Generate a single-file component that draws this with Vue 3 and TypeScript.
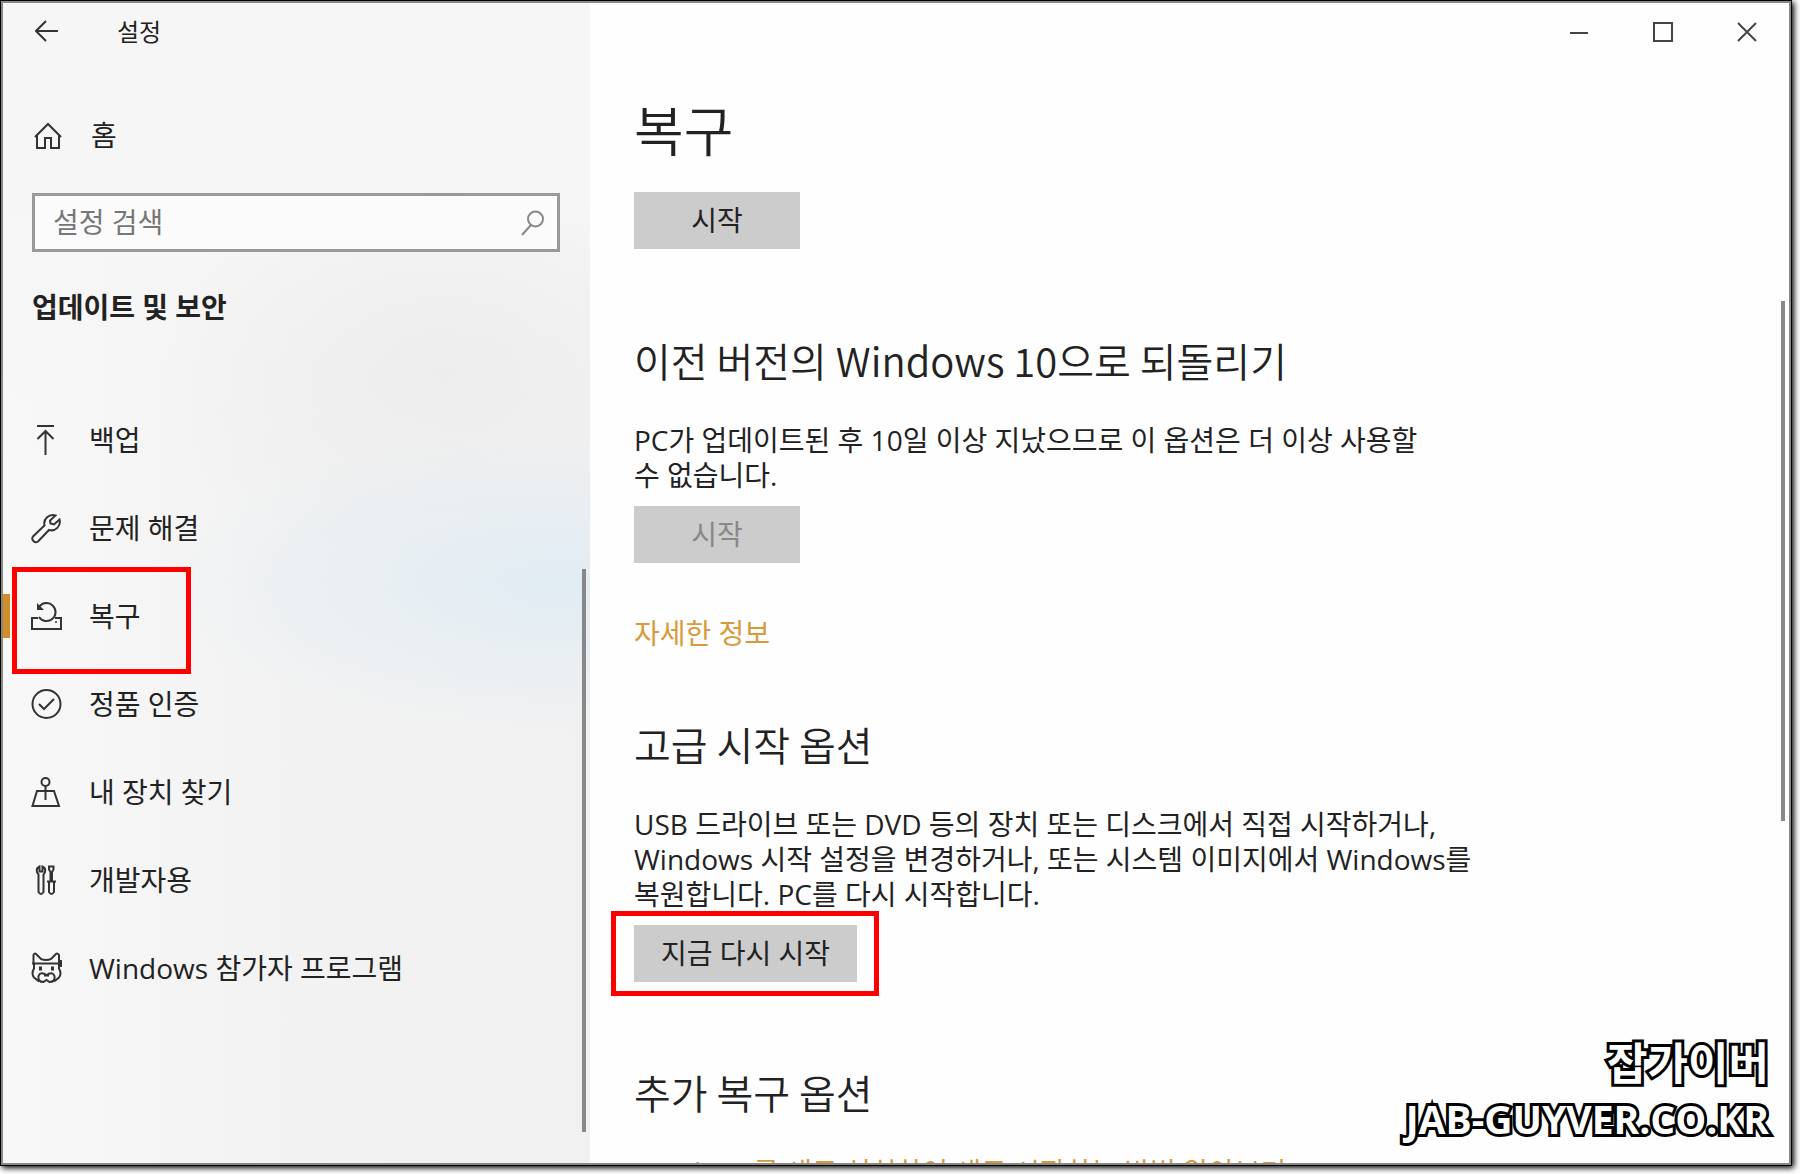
<script setup lang="ts">
interface NavItem { id: string; label: string }

const navItems: NavItem[] = [
  { id: 'backup', label: '백업' },
  { id: 'troubleshoot', label: '문제 해결' },
  { id: 'recovery', label: '복구' },
  { id: 'activation', label: '정품 인증' },
  { id: 'find', label: '내 장치 찾기' },
  { id: 'developer', label: '개발자용' },
  { id: 'insider', label: 'Windows 참가자 프로그램' },
]
const current = 'recovery'
</script>

<template>
  <div class="desktop">
    <div class="window">
      <aside class="sidebar">
        <header class="side-title">
          <button class="icon-button" type="button" aria-label="뒤로">
            <svg width="24" height="22" viewBox="0 0 24 22"><path d="M11 1 1 11l10 10M1 11h22" /></svg>
          </button>
          <span>설정</span>
        </header>
        <a class="home" href="#home">
          <svg width="28" height="28" viewBox="0 0 28 28"><path d="M1 15 14 2l13 13M3 13.500V26h8V16h6v10h8V13.500" /></svg>
          <span>홈</span>
        </a>
        <label class="search">
          <input type="text" placeholder="설정 검색" aria-label="설정 검색" />
          <svg width="24" height="28" viewBox="0 0 24 28"><circle cx="15.500" cy="10" r="7.500" /><path d="M11 16 2 26" /></svg>
        </label>
        <h2 class="category">업데이트 및 보안</h2>
        <nav class="nav">
          <a v-for="item in navItems" :key="item.id" :href="'#' + item.id" class="nav-item" :class="{ current: item.id === current }">
            <svg width="32" height="32" viewBox="0 0 32 32">
              <path v-if="item.id === 'backup'" d="M7 2h17M15.500 31V7M7.500 15l8-8 8 8" />
              <path v-else-if="item.id === 'troubleshoot'" d="M25.500 3.500A8.500 8.500 0 0 0 14.500 13.500L3 24.500A3.600 3.600 0 0 0 8 29.500L19 18A8.500 8.500 0 0 0 29.500 7.500L24 12.500 20.500 11.500 20 8.500Z" />
              <template v-else-if="item.id === 'recovery'">
                <path d="M8 18H2v11h29V18h-6M9.500 6.500A9 9 0 1 1 9 17" />
                <path class="solid" d="M7 3v7h7z" /><circle class="solid" cx="26" cy="22" r="1" />
              </template>
              <template v-else-if="item.id === 'activation'">
                <circle cx="16.500" cy="16" r="14" /><path d="m9 16 5 5 10-10" />
              </template>
              <template v-else-if="item.id === 'find'">
                <circle cx="15.500" cy="6" r="4" /><path d="M15.500 10v14M7 15h17l5 15H2.500Z" />
              </template>
              <template v-else-if="item.id === 'developer'">
                <path d="M9.500 2.500v5h3v-5c4 2 3 6 1 8V28q-2.500 4-5 0V10.500c-2-2-3-6 1-8ZM19 2.500h4.500v3L22 8v9h-1.500V8L19 5.500ZM17 17.500h9M19 17.500V28q2.500 4 5 0V17.500" />
              </template>
              <template v-else>
                <path d="M3.500 11V3Q5 0 7 3l4 4q5 2 10 0l4-4q2-3 4 0v8M2 11.500h30M4 11.500v5q-3 5 0 9l5 4M29 11.500v5q3 5 0 9l-5 4M31 8v7" />
                <path d="M16.500 23q-6-4-8 1-1 6 5 6l3-2 3 2q6 0 5-6-2-5-8-1ZM14 23.500h5" />
                <path class="solid" d="M9 14.500h3v4H9zM21 14.500h3v4h-3z" />
              </template>
            </svg>
            <span>{{ item.label }}</span>
          </a>
        </nav>
        <i class="scroll side-scroll"></i>
      </aside>

      <main class="content">
        <div class="controls">
          <button class="icon-button" type="button" aria-label="최소화"><svg width="20" height="20" viewBox="0 0 20 20"><path d="M1 11h18" /></svg></button>
          <button class="icon-button" type="button" aria-label="최대화"><svg width="20" height="20" viewBox="0 0 20 20"><path d="M1 1h18v18H1z" /></svg></button>
          <button class="icon-button" type="button" aria-label="닫기"><svg width="20" height="20" viewBox="0 0 20 20"><path d="m1 1 18 18M19 1 1 19" /></svg></button>
        </div>
        <h1>복구</h1>
        <button class="action" type="button">시작</button>
        <section>
          <h2>이전 버전의 Windows 10으로 되돌리기</h2>
          <p>PC가 업데이트된 후 10일 이상 지났으므로 이 옵션은 더 이상 사용할<br />수 없습니다.</p>
          <button class="action" type="button" disabled>시작</button>
          <a class="more" href="#more">자세한 정보</a>
        </section>
        <section class="advanced">
          <h2>고급 시작 옵션</h2>
          <p>USB 드라이브 또는 DVD 등의 장치 또는 디스크에서 직접 시작하거나,<br />Windows 시작 설정을 변경하거나, 또는 시스템 이미지에서 Windows를<br />복원합니다. PC를 다시 시작합니다.</p>
          <button class="action marked" type="button">지금 다시 시작</button>
        </section>
        <section class="extra">
          <h2>추가 복구 옵션</h2>
          <p><a class="fresh" href="#fresh">Windows를 새로 설치하여 새로 시작하는 방법 알아보기</a></p>
        </section>
        <i class="scroll main-scroll"></i>
      </main>
      <div class="watermark"><span class="name">잡가이버</span><span class="site">JAB-GUYVER.CO.KR</span></div>
    </div>
  </div>
</template>

<style>
body { margin: 0; background: #fff; }
</style>
<style scoped>
*, *::before, *::after { box-sizing: border-box; }
.desktop { height: 100vh; padding: 0 8px 8px 0; font: 28px/35px "Open Sans", "Noto Sans CJK KR", sans-serif; color: #222; }
.window { position: relative; display: flex; height: 100%; overflow: hidden; padding: 2px; background: #888; border: 1px solid #000; box-shadow: 2px 2px 6px #000; }
.sidebar {
  position: relative;
  flex: 0 0 587px;
  padding: 0 30px 0 29px;
  background:
    radial-gradient(ellipse 400px 150px at 95% 50%, #e1ecf3, #e1ecf300),
    radial-gradient(ellipse 300px 200px at 75% 32%, #ededed, #ededed00),
    linear-gradient(#f6f6f6 18%, #f6f6f600 40%),
    linear-gradient(90deg, #f8f8f8, #f2f2f2 50%, #f1f1f1);
}
svg { display: block; flex: none; fill: none; stroke: #333; stroke-width: 2; }
.solid { fill: #333; stroke: none; }
.icon-button { display: flex; padding: 0; border: 0; background: none; }
h1, h2, p { margin: 0; font-weight: 350; }
a { color: inherit; text-decoration: none; }
.side-title { display: flex; align-items: center; gap: 58px; height: 56px; padding-left: 3px; font-size: 24px; }
.home { display: flex; align-items: center; gap: 29px; height: 35px; margin-top: 59px; padding-left: 2px; }
.search { display: flex; align-items: center; height: 59px; margin-top: 40px; padding: 0 13px 0 18px; border: 3px solid #999; background: #fbfbfb; }
.search input { flex: 1; min-width: 0; padding: 0; border: 0; outline: 0; background: none; font: inherit; }
.search input::placeholder { color: #777; opacity: 1; }
.search svg { stroke: #888; }
.category { margin-top: 38px; font-size: 28px; font-weight: 700; }
.nav { margin: 71px 0 0 -2px; }
.nav-item { position: relative; display: flex; align-items: center; gap: 27px; height: 88px; }
.current::before { content: ""; position: absolute; left: -27px; top: 22px; width: 7px; height: 44px; background: #cf8e28; }
.current::after { content: ""; position: absolute; left: -18px; top: -5px; width: 179px; height: 107px; border: 5px solid #f00; }
.content { position: relative; flex: 1; min-width: 0; padding: 0 44px; background: #fefefe; overflow: hidden; }
.controls { display: flex; justify-content: flex-end; gap: 64px; height: 60px; margin-right: -12px; padding-top: 19px; }
.controls svg { stroke: #444; }
h1 { margin-top: 36px; font-size: 54px; line-height: 64px; }
.action { display: block; min-width: 166px; height: 57px; margin-top: 29px; padding: 0 27px; border: 0; background: #ccc; color: #222; font: inherit; }
.action:disabled { color: #888; }
section { margin-top: 86px; }
section h2 { font-family: "Noto Sans CJK KR", sans-serif; font-size: 40px; line-height: 50px; }
section p { margin-top: 38px; font-weight: 400; }
section .action { margin-top: 13px; }
.more { display: block; margin-top: 53px; color: #d99a3c; }
.fresh { color: #d99a3c; }
.advanced { margin-top: 68px; }
.extra { margin-top: 85px; }
.marked { position: relative; }
.marked::after { content: ""; position: absolute; inset: -14px -22px -14px -23px; border: 5px solid #f00; }
.scroll { position: absolute; width: 4px; background: #888; }
.side-scroll { right: 4px; top: 566px; height: 563px; }
.main-scroll { right: 4px; top: 298px; height: 520px; }
.watermark { position: absolute; right: 22px; bottom: 19px; display: flex; flex-direction: column; align-items: flex-end; font-weight: 700; line-height: 55px; color: #fff; -webkit-text-stroke: 6px #000; paint-order: stroke fill; }
.name { font-size: 44px; }
.site { font-size: 39px; }
</style>
